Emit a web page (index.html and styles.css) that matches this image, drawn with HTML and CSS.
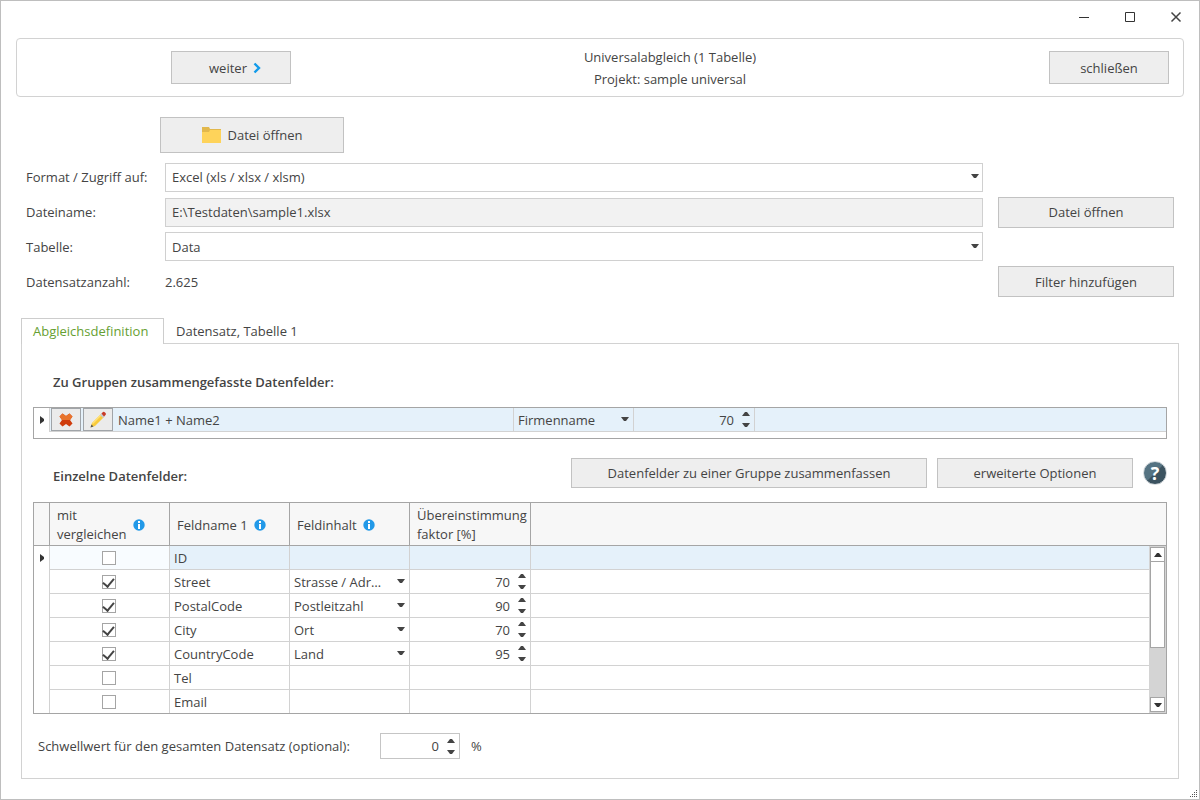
FILE: index.html
```html
<!DOCTYPE html>
<html lang="de">
<head>
<meta charset="utf-8">
<title>Universalabgleich (1 Tabelle)</title>
<link rel="stylesheet" href="styles.css">
</head>
<body>
<svg class="defs" aria-hidden="true">
  <symbol id="down" viewBox="0 0 8 4"><path d="M0 0h8L5 4H3z"/></symbol>
  <symbol id="up" viewBox="0 0 8 4"><path d="M0 4h8L5 0H3z"/></symbol>
  <symbol id="current" viewBox="0 0 4 8"><path d="M0 0l4 3v2L0 8z"/></symbol>
  <symbol id="info" viewBox="0 0 12 12"><circle cx="6" cy="6" r="5.700" fill="#2299e8"/><path d="M5 2h2v2H5zM5 5h2v5H5z" fill="#fff"/></symbol>
</svg>
<div class="window">
  <div class="titlebar">
    <button class="caption" type="button" aria-label="Minimieren"><svg width="12" height="12"><path d="M1 6.500h10" stroke="#333"/></svg></button>
    <button class="caption" type="button" aria-label="Maximieren"><svg width="12" height="12"><path d="M1.500 1.500h9v9h-9z" fill="none" stroke="#333"/></svg></button>
    <button class="caption" type="button" aria-label="Fenster schließen"><svg width="12" height="12"><path d="M1.500 1.500l9 9m0-9l-9 9" stroke="#444" stroke-width="1.500"/></svg></button>
  </div>

  <header class="toolbar">
    <button class="btn btn-tool btn-next" type="button">weiter <svg width="8" height="12"><path d="M1.500 1.500L6 6l-4.500 4.500" fill="none" stroke="#129bea" stroke-width="2.400"/></svg></button>
    <div class="heading">Universalabgleich (1 Tabelle)<br>Projekt: sample universal</div>
    <button class="btn btn-tool" type="button">schließen</button>
  </header>

  <button class="btn btn-open" type="button"><svg width="20" height="18" viewBox="0 0 20 18"><path d="M1 1h7l1 2h11v4H1z" fill="#e2b84c"/><path d="M1 6h7l1-2h11v13H1z" fill="#fed35a"/></svg>Datei öffnen</button>

  <form class="source">
    <label for="format">Format / Zugriff auf:</label>
    <div class="pick field"><select id="format"><option>Excel (xls / xlsx / xlsm)</option></select><svg class="caret"><use href="#down"/></svg></div>
    <span></span>
    <label for="file">Dateiname:</label>
    <input class="field readonly" id="file" type="text" value="E:\Testdaten\sample1.xlsx" readonly>
    <button class="btn btn-side" type="button">Datei öffnen</button>
    <label for="table">Tabelle:</label>
    <div class="pick field"><select id="table"><option>Data</option></select><svg class="caret"><use href="#down"/></svg></div>
    <span></span>
    <label for="count">Datensatzanzahl:</label>
    <output id="count">2.625</output>
    <button class="btn btn-side" type="button">Filter hinzufügen</button>
  </form>

  <div class="tabs" role="tablist">
    <button class="tab active" type="button" role="tab" aria-selected="true">Abgleichsdefinition</button>
    <button class="tab" type="button" role="tab" aria-selected="false">Datensatz, Tabelle 1</button>
  </div>

  <main class="panel">
    <h2>Zu Gruppen zusammengefasste Datenfelder:</h2>
    <div class="grid groups">
      <table>
        <colgroup><col class="c-mark"><col class="c-group"><col class="c-mid"><col class="c-num"><col></colgroup>
        <tbody>
          <tr class="selected">
            <td class="mark"><svg class="pointer"><use href="#current"/></svg></td>
            <td class="tools"><div class="tools-row">
              <button class="icon-btn" type="button" aria-label="Löschen"><svg width="14" height="14" viewBox="0 0 14 14"><path d="M3.500 .5L7 3l3.500-2.500 3 3L11 7l2.500 3.500-3 3L7 11l-3.500 2.500-3-3L3 7 .5 3.500z" fill="#cf3c0c"/><path d="M3.500 .5L7 3l3.500-2.500 3 3L11 7H3L.5 3.500z" fill="#e8732c"/></svg></button>
              <button class="icon-btn" type="button" aria-label="Bearbeiten"><svg width="18" height="18" viewBox="0 0 18 18"><path d="M1.500 16.500l1.500-4.500L12 3l3 3-9 9z" fill="#f8cb3c"/><path d="M3 12L12 3l1 1-9 9z" fill="#ffe17a"/><path d="M11 4l2-2 3 3-2 2z" fill="#c5cbd0"/><path d="M12.500 2.500L14 1q1-.5 2 .5l.5.500q1 1 0 2L15 5.500z" fill="#c83a26"/><path d="M1.500 16.500l1-3 2 2z" fill="#555"/></svg></button>
              <span>Name1 + Name2</span></div></td>
            <td><div class="pick"><select aria-label="Feldinhalt"><option>Firmenname</option></select><svg class="caret"><use href="#down"/></svg></div></td>
            <td><div class="spin"><input type="number" value="70" aria-label="Faktor"><span class="arrows"><svg><use href="#up"/></svg><svg><use href="#down"/></svg></span></div></td>
            <td></td>
          </tr>
        </tbody>
      </table>
    </div>

    <div class="actions">
      <h2>Einzelne Datenfelder:</h2>
      <button class="btn btn-group" type="button">Datenfelder zu einer Gruppe zusammenfassen</button>
      <button class="btn btn-more" type="button">erweiterte Optionen</button>
      <button class="help" type="button" aria-label="Hilfe">?</button>
    </div>

    <div class="grid fields">
      <table>
        <colgroup><col class="c-mark"><col class="c-mid"><col class="c-mid"><col class="c-mid"><col class="c-num"><col></colgroup>
        <thead>
          <tr>
            <th></th>
            <th><div class="th"><span>mit<br>vergleichen</span><svg class="info"><use href="#info"/></svg></div></th>
            <th><div class="th"><span>Feldname 1</span><svg class="info"><use href="#info"/></svg></div></th>
            <th><div class="th"><span>Feldinhalt</span><svg class="info"><use href="#info"/></svg></div></th>
            <th><div class="th"><span>Übereinstimmung<br>faktor [%]</span></div></th>
            <th></th>
          </tr>
        </thead>
        <tbody>
          <tr class="selected">
            <td class="mark"><svg class="pointer"><use href="#current"/></svg></td>
            <td class="check focus"><input type="checkbox" aria-label="ID vergleichen"></td>
            <td class="name">ID</td><td></td><td></td><td></td>
          </tr>
          <tr>
            <td class="mark"></td>
            <td class="check"><input type="checkbox" checked aria-label="Street vergleichen"></td>
            <td class="name">Street</td>
            <td><div class="pick"><select aria-label="Feldinhalt Street"><option>Strasse / Adresse</option></select><svg class="caret"><use href="#down"/></svg></div></td>
            <td><div class="spin"><input type="number" value="70" aria-label="Faktor Street"><span class="arrows"><svg><use href="#up"/></svg><svg><use href="#down"/></svg></span></div></td>
            <td></td>
          </tr>
          <tr>
            <td class="mark"></td>
            <td class="check"><input type="checkbox" checked aria-label="PostalCode vergleichen"></td>
            <td class="name">PostalCode</td>
            <td><div class="pick"><select aria-label="Feldinhalt PostalCode"><option>Postleitzahl</option></select><svg class="caret"><use href="#down"/></svg></div></td>
            <td><div class="spin"><input type="number" value="90" aria-label="Faktor PostalCode"><span class="arrows"><svg><use href="#up"/></svg><svg><use href="#down"/></svg></span></div></td>
            <td></td>
          </tr>
          <tr>
            <td class="mark"></td>
            <td class="check"><input type="checkbox" checked aria-label="City vergleichen"></td>
            <td class="name">City</td>
            <td><div class="pick"><select aria-label="Feldinhalt City"><option>Ort</option></select><svg class="caret"><use href="#down"/></svg></div></td>
            <td><div class="spin"><input type="number" value="70" aria-label="Faktor City"><span class="arrows"><svg><use href="#up"/></svg><svg><use href="#down"/></svg></span></div></td>
            <td></td>
          </tr>
          <tr>
            <td class="mark"></td>
            <td class="check"><input type="checkbox" checked aria-label="CountryCode vergleichen"></td>
            <td class="name">CountryCode</td>
            <td><div class="pick"><select aria-label="Feldinhalt CountryCode"><option>Land</option></select><svg class="caret"><use href="#down"/></svg></div></td>
            <td><div class="spin"><input type="number" value="95" aria-label="Faktor CountryCode"><span class="arrows"><svg><use href="#up"/></svg><svg><use href="#down"/></svg></span></div></td>
            <td></td>
          </tr>
          <tr>
            <td class="mark"></td>
            <td class="check"><input type="checkbox" aria-label="Tel vergleichen"></td>
            <td class="name">Tel</td><td></td><td></td><td></td>
          </tr>
          <tr>
            <td class="mark"></td>
            <td class="check"><input type="checkbox" aria-label="Email vergleichen"></td>
            <td class="name">Email</td><td></td><td></td><td></td>
          </tr>
        </tbody>
      </table>
      <div class="scrollbar">
        <button type="button" aria-label="Nach oben"><svg><use href="#up"/></svg></button>
        <div class="thumb"></div>
        <button type="button" aria-label="Nach unten"><svg><use href="#down"/></svg></button>
      </div>
    </div>

    <div class="threshold">
      <label for="limit">Schwellwert für den gesamten Datensatz (optional):</label>
      <div class="spin boxed"><input id="limit" type="number" value="0"><span class="arrows"><svg><use href="#up"/></svg><svg><use href="#down"/></svg></span></div>
      <span>%</span>
    </div>
  </main>
  <svg class="grip" width="8" height="8" fill="#555"><path d="M6 0h1v1H6zM4 2h1v1H4zM6 2h1v1H6zM2 4h1v1H2zM4 4h1v1H4zM6 4h1v1H6zM0 6h1v1H0zM2 6h1v1H2zM4 6h1v1H4zM6 6h1v1H6z"/></svg>
</div>
</body>
</html>
```
FILE: styles.css
```css
* { box-sizing: border-box; }
body { margin: 0; background: #fff; }
body, button, input, select {
  font-family: "Open Sans", "Noto Sans", sans-serif;
  font-size: 13px;
  line-height: 18px;
  color: #444;
}
button { padding: 0; }
svg { display: block; flex: none; }
.defs { position: absolute; width: 0; height: 0; }

.window {
  position: relative;
  display: flex;
  flex-direction: column;
  min-height: 100vh;
  border: 1px solid #bebebe;
}
.titlebar { display: flex; justify-content: flex-end; height: 37px; padding-bottom: 6px; }
.caption {
  display: flex;
  align-items: center;
  justify-content: center;
  width: 46px;
  border: 0;
  background: none;
}

.toolbar {
  display: flex;
  align-items: center;
  justify-content: space-between;
  height: 59px;
  margin: 0 15px;
  padding: 0 14px 0 154px;
  border: 1px solid #d2d2d2;
  border-radius: 4px;
}
.heading { line-height: 22px; text-align: center; }

.btn {
  display: flex;
  align-items: center;
  justify-content: center;
  gap: 6px;
  border: 1px solid #c2c2c2;
  background: #eee;
}
.btn-tool { width: 120px; height: 33px; }
.btn-next { padding-left: 8px; }
.btn-open { width: 184px; height: 36px; margin: 20px 0 6px 159px; }
.btn-side { height: 31px; }

.source {
  display: grid;
  grid-template-columns: 139px minmax(0, 1fr) 176px;
  grid-template-rows: 36px 34px;
  grid-auto-rows: 35px;
  align-items: center;
  margin: 0 25px;
}
.source .btn { margin-left: 0; }
.source .field { margin-right: 15px; }
.field { height: 29px; border: 1px solid #d0d0d0; background: #fff; padding: 0; }
.readonly { padding: 0 6px; background: #f2f2f2; }

.pick { position: relative; display: flex; min-width: 0; }
.pick select {
  flex: 1;
  min-width: 0;
  width: 100%;
  padding: 0 24px 0 4px;
  border: 0;
  background: none;
  appearance: none;
  text-overflow: ellipsis;
}
.field select { padding-left: 6px; }
.caret { position: absolute; right: 4px; top: calc(50% - 3px); width: 8px; height: 4px; fill: #444; pointer-events: none; }

.field .caret { right: 3px; }

.spin { display: flex; align-items: center; padding-right: 4px; gap: 8px; }
.spin input {
  flex: 1;
  min-width: 0;
  width: 100%;
  padding: 0;
  border: 0;
  background: none;
  text-align: right;
  appearance: textfield;
}
.spin input::-webkit-inner-spin-button { appearance: none; margin: 0; }
.arrows { display: grid; gap: 7px; }
.arrows svg { width: 8px; height: 4px; fill: #444; }

.tabs { display: flex; margin: 19px 20px 0; }
.tab {
  height: 25px;
  padding: 0 11px;
  border: 1px solid transparent;
  border-bottom: 0;
  background: #fff;
}
.tab.active {
  z-index: 1;
  height: 26px;
  min-width: 143px;
  margin-bottom: -1px;
  padding-bottom: 2px;
  border-color: #cdcdcd;
  color: #66a032;
  text-align: left;
}

.panel { flex: 1; margin: 0 20px 20px; padding: 0 11px; border: 1px solid #d2d2d2; }
h2 { margin: 0; font-size: 13px; line-height: 18px; font-weight: 600; }
.panel > h2 { padding: 29px 20px 16px; }

.grid { position: relative; border: 1px solid #a5a5a5; }
table { width: 100%; table-layout: fixed; border-collapse: separate; border-spacing: 0; }
.c-mark { width: 16px; }
.c-group { width: 464px; }
.c-mid { width: 120px; }
.c-num { width: 121px; }
td { height: 24px; padding: 0; border-right: 1px solid #d2d2d2; border-bottom: 1px solid #d2d2d2; }
td:last-child, th:last-child { border-right: 0; }
.selected td { background: #e5f1fa; }
.selected .mark, .mark { background: #fff; border-bottom: 0; }
.selected .focus { background: #f8fcff; }
.groups { padding-bottom: 6px; }
.pointer { width: 4px; height: 8px; margin-left: 6px; fill: #333; }
.tools-row { display: flex; align-items: center; gap: 2px; padding-left: 1px; }
.tools-row span { margin-left: 3px; }
.icon-btn {
  display: flex;
  align-items: center;
  justify-content: center;
  width: 30px;
  height: 23px;
  border: 1px solid #a0a4a8;
  background: #ebebeb;
}

.actions { display: flex; align-items: center; height: 63px; padding: 4px 0 0 20px; }
.actions h2 { flex: 1; padding-top: 6px; }
.actions .btn { height: 30px; margin-right: 10px; }
.btn-group { width: 356px; }
.btn-more { width: 196px; }
.help {
  width: 24px;
  height: 24px;
  border: 1px solid #d5dadd;
  border-radius: 50%;
  background: linear-gradient(135deg, #557382 0 48%, #3c5360 52%);
  color: #fff;
  font-size: 18px;
  font-weight: 700;
}

th {
  height: 43px;
  padding: 2px 0 0;
  border-right: 1px solid #a5a5a5;
  border-bottom: 1px solid #a5a5a5;
  background: #f7f7f7;
  font-weight: 400;
  line-height: 19px;
  text-align: left;
}
.th { display: flex; align-items: center; gap: 6px; margin-left: 7px; white-space: nowrap; }
.info { width: 12px; height: 12px; }
.fields tbody tr:last-child td { height: 23px; border-bottom: 0; }
.name { padding-left: 4px; }
.check { padding-right: 2px; }
.check input {
  display: grid;
  justify-content: center;
  width: 14px;
  height: 14px;
  margin: 0 auto;
  border: 1px solid #a5a5a5;
  background: #fff;
  appearance: none;
}
.check input:checked::after {
  content: "";
  width: 5px;
  height: 9px;
  border: solid #444;
  border-width: 0 2px 2px 0;
  transform: rotate(40deg);
}

.scrollbar {
  position: absolute;
  top: 43px;
  right: 0;
  bottom: 0;
  display: flex;
  flex-direction: column;
  width: 17px;
  padding: 1px;
  background: #d4d4d4;
}
.scrollbar button {
  display: grid;
  place-items: center;
  width: 15px;
  height: 15px;
  border: 1px solid #a5a5a5;
  background: #fff;
}
.scrollbar button:last-child { margin-top: auto; }
.scrollbar svg { width: 8px; height: 4px; fill: #333; }
.thumb { height: 87px; margin-top: -1px; border: 1px solid #a5a5a5; background: #fff; }

.threshold { display: flex; align-items: center; padding: 19px 0 19px 5px; }
.threshold label { min-width: 342px; }
.boxed { width: 80px; height: 26px; margin-right: 11px; border: 1px solid #c5c5c5; }
.grip { position: absolute; right: 1px; bottom: 1px; }
```
